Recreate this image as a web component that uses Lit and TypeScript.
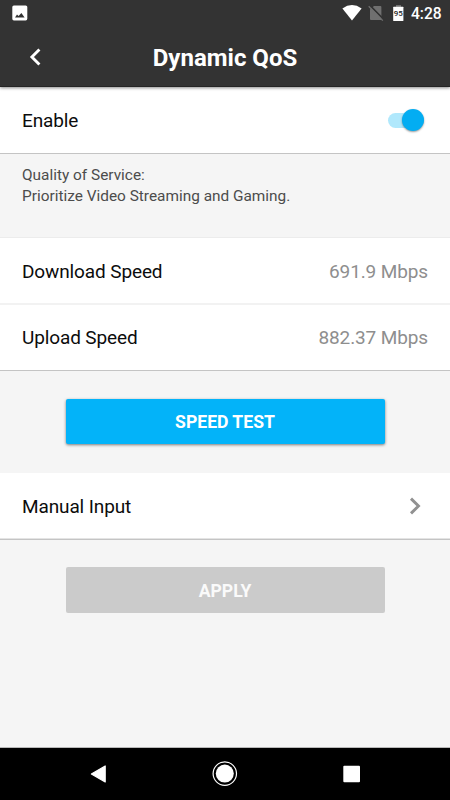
import { LitElement, html, css, svg } from "lit";
import { customElement, property } from "lit/decorators.js";

@customElement("status-bar")
class StatusBar extends LitElement {
  static styles = css`
    :host { display: flex; align-items: center; height: 27px; padding: 0 9px 0 12px; }
    .spacer { flex: 1; }
    svg { display: block; }
    .wifi { margin-right: 6px; }
    .sim { margin-right: 9px; }
    .battery { margin-right: 7px; }
    .num { font: 500 8px Roboto, sans-serif; fill: #222; }
    .time { width: 30px; padding-top: 2px; font-size: 15.6px; font-weight: 500; line-height: 27px; color: #fff; white-space: nowrap; }
  `;
  render() {
    return html`
      <svg width="16" height="27" viewBox="0 0 16 27">
        <rect x="0.3" y="5.4" width="15" height="15" rx="1.6" fill="#fff" />
        <path d="M3 17.6L5 14.4L6.6 16L9.4 13.1L12.6 17.6Z" fill="#333" />
      </svg>
      <span class="spacer"></span>
      <svg class="wifi" width="20" height="27" viewBox="0 0 20 27">
        <path d="M0.4 8.4Q10 1.5 19.6 8.4L10 20.6Z" fill="#fff" />
      </svg>
      <svg class="sim" width="16" height="27" viewBox="0 0 16 27">
        <path d="M6 6H12.4Q13.4 6 13.4 7V20H3Q2 20 2 19V9.5Z" fill="#707070" />
        <path d="M1.6 5.2L15.6 19.4" stroke="#333" stroke-width="1.8" />
        <path d="M0.7 6.3L14.8 20.6" stroke="#707070" stroke-width="1.3" />
      </svg>
      <svg class="battery" width="11" height="27" viewBox="0 0 11 27">
        <path d="M3 5H8V7H3Z" fill="#707070" />
        <rect x="0.2" y="6.8" width="10.2" height="14.2" rx="0.5" fill="#fff" />
        <text class="num" x="5.3" y="16" text-anchor="middle">95</text>
      </svg>
      <span class="time">4:28</span>
    `;
  }
}

@customElement("title-bar")
class TitleBar extends LitElement {
  static styles = css`
    :host { display: grid; grid-template-columns: 60px 1fr 60px; align-items: center; height: 60px; }
    .back { display: block; margin-left: 28px; margin-top: -2px; }
    .title { text-align: center; font-size: 24px; font-weight: 700; line-height: 60px; color: #fff; margin-top: 1px; }
  `;
  render() {
    return html`
      <svg class="back" width="14" height="20" viewBox="0 0 14 20">
        <path d="M11.4 2.4L3.9 10L11.4 17.6" fill="none" stroke="#fff" stroke-width="2.9" />
      </svg>
      <span class="title">Dynamic QoS</span>
    `;
  }
}

@customElement("setting-row")
class SettingRow extends LitElement {
  @property() label = "";
  static styles = css`
    :host { display: flex; align-items: center; justify-content: space-between;
      box-sizing: border-box; height: 66px; padding: 0 22px; background: #fff;
      color: #0c0c0c; font-size: 19px; line-height: 24px; letter-spacing: -0.12px; }
  `;
  render() {
    return html`<span>${this.label}</span><slot></slot>`;
  }
}

@customElement("nav-bar")
class NavBar extends LitElement {
  static styles = css`
    :host { display: flex; justify-content: space-around; align-items: center; height: 52px;
      padding: 0 35px; background: #000; }
    svg { display: block; }
  `;
  icon(shape: unknown) {
    return html`<svg width="28" height="52" viewBox="0 0 28 52">${shape}</svg>`;
  }
  render() {
    return html`
      ${this.icon(svg`<path d="M7.4 26L21.2 18V34Z" fill="#fff" stroke="#fff" stroke-width="1.2" stroke-linejoin="round" />`)}
      ${this.icon(svg`<circle cx="13.8" cy="25.6" r="11.7" fill="none" stroke="#fff" stroke-width="1.2" /><circle cx="13.8" cy="25.6" r="9" fill="#fff" />`)}
      ${this.icon(svg`<rect x="5.3" y="17.7" width="16.7" height="16.5" rx="1" fill="#fff" />`)}
    `;
  }
}

@customElement("app-root")
class AppRoot extends LitElement {
  static styles = css`
    :host { display: flex; flex-direction: column; height: 800px; overflow: hidden;
      background: #f5f5f5; font-family: Roboto, sans-serif; }
    .top { position: relative; box-sizing: border-box; height: 87px; background: #333;
      border-bottom: 1px solid #252525; box-shadow: 0 1px 3px rgba(0, 0, 0, 0.45); }
    .group { border-bottom: 1px solid #c4c4c4; }
    .enable { padding-top: 2px; }
    .divided { height: 67px; padding-top: 3px; border-bottom: 2px solid #f2f2f2; }
    .last { height: 65px; }
    .manual { padding-top: 2px; box-shadow: inset 0 -1px #e4e4e4; }
    .note { box-sizing: border-box; height: 84px; padding: 11px 22px 0; font-size: 15.4px;
      line-height: 21px; color: #4c4c4c; border-bottom: 1px solid #ececec; }
    .value { color: #8e8e8e; }
    .switch { position: relative; width: 36px; height: 15px; border-radius: 8px;
      background: #b0e8fc; margin: -1px 4px 0 0; }
    .knob { position: absolute; right: -0.4px; top: -3.6px; width: 22px; height: 22px; border-radius: 50%;
      background: #03adf2; box-shadow: 0 1px 2px rgba(0, 0, 0, 0.4); }
    .action { display: flex; align-items: center; justify-content: center; width: 319px;
      height: 45px; margin: 28px auto 29px; border-radius: 2px; font-size: 17.6px; font-weight: 700;
      color: #fff; background: #03b3f9; box-shadow: 0 1px 3px rgba(0, 0, 0, 0.5); }
    .disabled { box-sizing: border-box; height: 46px; margin-top: 27px; padding-top: 2px;
      background: #cbcbcb; box-shadow: none; color: #fafafa; }
    .chevron { display: block; margin: -3px 6px 0 0; }
    .fill { flex: 1; border-bottom: 1px solid #b8b8b8; }
  `;
  render() {
    return html`
      <header class="top"><status-bar></status-bar><title-bar></title-bar></header>
      <section class="group">
        <setting-row class="enable" label="Enable"><span class="switch"><span class="knob"></span></span></setting-row>
      </section>
      <div class="note">Quality of Service:<br />Prioritize Video Streaming and Gaming.</div>
      <section class="group">
        <setting-row class="divided" label="Download Speed"><span class="value">691.9 Mbps</span></setting-row>
        <setting-row class="last" label="Upload Speed"><span class="value">882.37 Mbps</span></setting-row>
      </section>
      <div class="action">SPEED TEST</div>
      <section class="group">
        <setting-row class="manual" label="Manual Input">
          <svg class="chevron" width="14" height="20" viewBox="0 0 14 20">
            <path d="M3 2.6L10.5 10L3 17.4" fill="none" stroke="#919191" stroke-width="2.9" />
          </svg>
        </setting-row>
      </section>
      <div class="action disabled">APPLY</div>
      <div class="fill"></div>
      <nav-bar></nav-bar>
    `;
  }
}
